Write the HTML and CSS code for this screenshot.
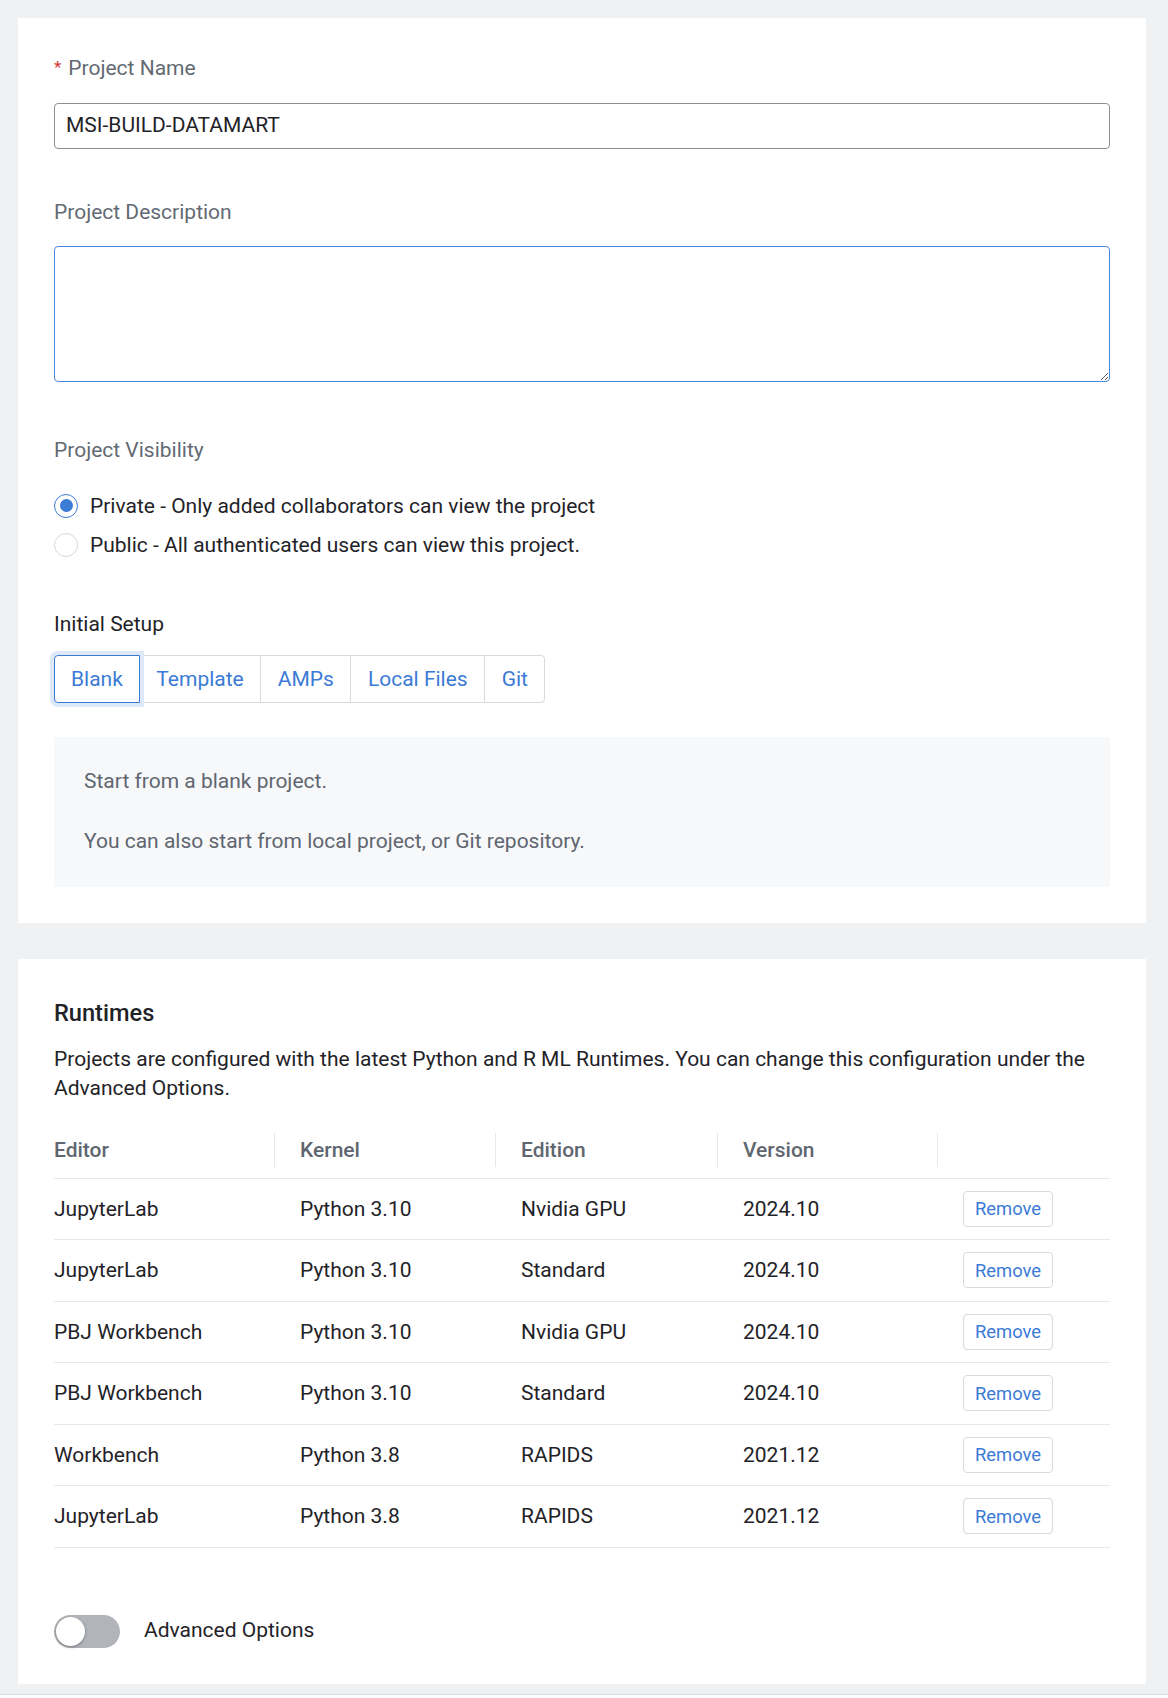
FILE: index.html
```html
<!DOCTYPE html>
<html lang="en">
<head>
<meta charset="utf-8">
<title>New Project</title>
<link rel="stylesheet" href="styles.css">
</head>
<body>
<div class="page">
  <section class="card">
    <div class="form-item">
      <div class="form-label"><span class="req">*</span>Project Name</div>
      <input class="text-input" type="text" value="MSI-BUILD-DATAMART">
    </div>
    <div class="form-item gap-desc">
      <div class="form-label">Project Description</div>
      <textarea class="text-area"></textarea>
    </div>
    <div class="form-item gap-vis">
      <div class="form-label">Project Visibility</div>
      <div class="radio-group">
        <label class="radio-row"><span class="radio checked"></span><span>Private - Only added collaborators can view the project</span></label>
        <label class="radio-row"><span class="radio"></span><span>Public - All authenticated users can view this project.</span></label>
      </div>
    </div>
    <div class="form-item gap-setup">
      <div class="form-label dark">Initial Setup</div>
      <div class="seg">
        <button class="seg-btn active">Blank</button><button class="seg-btn">Template</button><button class="seg-btn">AMPs</button><button class="seg-btn">Local Files</button><button class="seg-btn last">Git</button>
      </div>
      <div class="info-box">
        <p>Start from a blank project.</p>
        <p>You can also start from local project, or Git repository.</p>
      </div>
    </div>
  </section>

  <section class="card">
    <h2 class="card-title">Runtimes</h2>
    <p class="card-text">Projects are configured with the latest Python and R ML Runtimes. You can change this configuration under the Advanced Options.</p>
    <table class="rt-table">
      <colgroup>
        <col class="c1"><col class="c2"><col class="c3"><col class="c4"><col>
      </colgroup>
      <thead>
        <tr><th>Editor</th><th>Kernel</th><th>Edition</th><th>Version</th><th></th></tr>
      </thead>
      <tbody>
        <tr><td>JupyterLab</td><td>Python 3.10</td><td>Nvidia GPU</td><td>2024.10</td><td><button class="btn-remove">Remove</button></td></tr>
        <tr><td>JupyterLab</td><td>Python 3.10</td><td>Standard</td><td>2024.10</td><td><button class="btn-remove">Remove</button></td></tr>
        <tr><td>PBJ Workbench</td><td>Python 3.10</td><td>Nvidia GPU</td><td>2024.10</td><td><button class="btn-remove">Remove</button></td></tr>
        <tr><td>PBJ Workbench</td><td>Python 3.10</td><td>Standard</td><td>2024.10</td><td><button class="btn-remove">Remove</button></td></tr>
        <tr><td>Workbench</td><td>Python 3.8</td><td>RAPIDS</td><td>2021.12</td><td><button class="btn-remove">Remove</button></td></tr>
        <tr><td>JupyterLab</td><td>Python 3.8</td><td>RAPIDS</td><td>2021.12</td><td><button class="btn-remove">Remove</button></td></tr>
      </tbody>
    </table>
    <div class="adv">
      <span class="switch"><span class="knob"></span></span>
      <span class="adv-label">Advanced Options</span>
    </div>
  </section>
</div>
<div class="footer"></div>
</body>
</html>
```

FILE: styles.css
```css
* { box-sizing: border-box; }

html, body {
  margin: 0;
  padding: 0;
}

body {
  background: #f0f1f3;
  font-family: Roboto, "Noto Sans", "Liberation Sans", Arial, sans-serif;
  font-size: 21px;
  color: #1f2328;
}

.page {
  padding: 18px 22px 0 18px;
}

.card {
  background: #ffffff;
  padding: 36px;
}

.card + .card {
  margin-top: 36px;
}

.form-label {
  font-size: 21px;
  line-height: 29px;
  color: #636a73;
  margin-bottom: 19px;
}

.form-label.dark {
  color: #1f2328;
  margin-bottom: 16px;
}

.req {
  color: #d4393a;
  font-size: 17px;
  margin-right: 7px;
  position: relative;
  top: -2px;
}

.text-input {
  display: block;
  width: 100%;
  height: 46px;
  border: 1px solid #8c9197;
  border-radius: 4px;
  padding: 0 11px 3px;
  font-family: inherit;
  font-size: 21px;
  color: #1f2328;
  background: #fff;
  outline: none;
}

.gap-desc { margin-top: 49px; }

.text-area {
  display: block;
  width: 100%;
  height: 136px;
  border: 1px solid #4a88de;
  border-radius: 4px;
  font-family: inherit;
  font-size: 21px;
  padding: 8px 11px;
  background: #fff;
  outline: none;
  resize: vertical;
}

.gap-vis { margin-top: 54px; }

.form-item.gap-vis .form-label { margin-bottom: 21px; }

.radio-group {
  display: flex;
  flex-direction: column;
}

.radio-row {
  display: flex;
  align-items: center;
  height: 39px;
  font-size: 21px;
  color: #1f2328;
}

.radio {
  width: 24px;
  height: 24px;
  border-radius: 50%;
  border: 1px solid #d6d8db;
  background: #fff;
  margin-right: 12px;
  flex: none;
  display: flex;
  align-items: center;
  justify-content: center;
}

.radio.checked {
  border-color: #3b7bd6;
}

.radio.checked::after {
  content: "";
  width: 13px;
  height: 13px;
  border-radius: 50%;
  background: #3b7bd6;
}

.gap-setup { margin-top: 46px; }

.seg {
  display: flex;
  align-items: stretch;
  height: 48px;
}

.seg-btn {
  font-family: inherit;
  font-size: 21px;
  color: #3b7bd6;
  background: #fff;
  border: 1px solid #d9dadd;
  padding: 0 16.5px;
  margin: 0 0 0 -1px;
  cursor: pointer;
  position: relative;
}

.seg-btn:first-child {
  margin-left: 0;
  border-radius: 4px 0 0 4px;
  padding: 0 16px;
}

.seg-btn.last {
  border-radius: 0 4px 4px 0;
}

.seg-btn.active {
  border-color: #3b7bd6;
  z-index: 1;
  box-shadow: 0 0 0 4px #dde8f8;
}

.info-box {
  margin-top: 34px;
  background: #f7f8fa;
  padding: 30px 30px 31px;
}

.info-box p {
  margin: 0;
  font-size: 21px;
  line-height: 29px;
  color: #5f6670;
}

.info-box p + p {
  margin-top: 31px;
}

.card-title {
  margin: 2px 0 0;
  font-size: 23.6px;
  line-height: 32px;
  font-weight: 500;
  color: #1f2328;
}

.card-text {
  margin: 16px 0 0;
  font-size: 21px;
  line-height: 28.5px;
  color: #1f2328;
}

.rt-table {
  margin-top: 21px;
  width: 100%;
  border-collapse: collapse;
  table-layout: fixed;
}

.rt-table col.c1 { width: 220px; }
.rt-table col.c2 { width: 221px; }
.rt-table col.c3 { width: 222px; }
.rt-table col.c4 { width: 220px; }

.rt-table th {
  height: 55px;
  text-align: left;
  font-weight: 500;
  font-size: 21px;
  color: #5f6670;
  border-bottom: 1px solid #e7e8ea;
  padding: 0 0 0 26px;
  position: relative;
  vertical-align: middle;
}

.rt-table th:first-child,
.rt-table td:first-child {
  padding-left: 0;
}

.rt-table th + th::before {
  content: "";
  position: absolute;
  left: 0;
  top: 50%;
  width: 1px;
  height: 34px;
  margin-top: -17px;
  background: #e7e8ea;
}

.rt-table td {
  height: 61.5px;
  padding: 0 0 0 26px;
  border-bottom: 1px solid #e7e8ea;
  font-size: 21px;
  color: #1f2328;
  vertical-align: middle;
}

.btn-remove {
  height: 36px;
  padding: 0 11px;
  font-family: inherit;
  font-size: 18.4px;
  color: #3b7bd6;
  background: #fff;
  border: 1px solid #d9dadd;
  border-radius: 4px;
  cursor: pointer;
}

.adv {
  margin-top: 67px;
  display: flex;
  align-items: center;
  height: 33px;
}

.switch {
  position: relative;
  width: 66px;
  height: 33px;
  border-radius: 17px;
  background: #b1b4b8;
  flex: none;
}

.knob {
  position: absolute;
  left: 2px;
  top: 2px;
  width: 29px;
  height: 29px;
  border-radius: 50%;
  background: #fff;
  box-shadow: 0 1px 3px rgba(0, 0, 0, 0.35);
}

.adv-label {
  margin-left: 24px;
  padding-bottom: 2px;
  font-size: 21px;
  color: #1f2328;
}

.footer {
  margin-top: 10px;
  height: 40px;
  background: #ffffff;
  border-top: 1px solid #d8d9dc;
}
```
